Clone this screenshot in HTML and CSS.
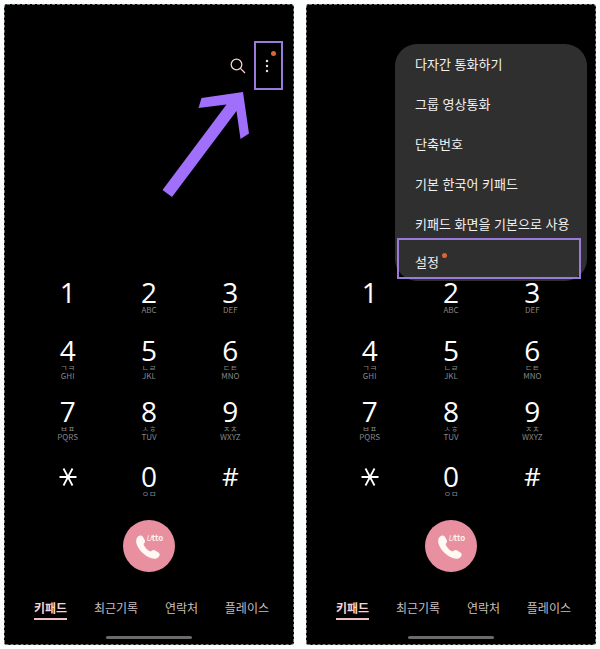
FILE: index.html
```
<!DOCTYPE html>
<html lang="ko">
<head>
<meta charset="UTF-8">
<meta name="viewport" content="width=device-width, initial-scale=1.0">
<title>전화 키패드</title>
<link rel="stylesheet" href="styles.css">
</head>
<body>

<main class="screens">
    <section class="screen">
        <header class="top">
            <button class="icon-btn" type="button" aria-label="검색">
                <svg width="16" height="16" viewBox="0 0 16 16"><circle cx="6.5" cy="6.5" r="5.3"/><path d="M10.4 10.4L15 15"/></svg>
            </button>
            <button class="icon-btn more marked" type="button" aria-label="더보기">
                <svg width="4" height="14" viewBox="0 0 4 14"><circle cx="2" cy="2" r="1.2"/><circle cx="2" cy="7" r="1.2"/><circle cx="2" cy="12" r="1.2"/></svg>
                <span class="dot"></span>
            </button>
            <svg class="arrow" width="88" height="107" viewBox="0 0 88 107"><path d="M0.5 99L64.5 13.500L36.500 17L39.500 7L81 1L87 42.500L78.500 48L74.500 20L10 106Z"/></svg>
        </header>
        <div class="keypad">
            <button class="key" type="button">1</button>
            <button class="key" type="button">2<small>ABC</small></button>
            <button class="key" type="button">3<small>DEF</small></button>
            <button class="key" type="button">4<span>ㄱㅋ</span><small>GHI</small></button>
            <button class="key" type="button">5<span>ㄴㄹ</span><small>JKL</small></button>
            <button class="key" type="button">6<span>ㄷㅌ</span><small>MNO</small></button>
            <button class="key" type="button">7<span>ㅂㅍ</span><small>PQRS</small></button>
            <button class="key" type="button">8<span>ㅅㅎ</span><small>TUV</small></button>
            <button class="key" type="button">9<span>ㅈㅊ</span><small>WXYZ</small></button>
            <button class="key" type="button" aria-label="별표"><svg width="18" height="28" viewBox="0 0 18 28"><path d="M0.500 14H17.500M4.500 5.500L13.500 22.500M13.500 5.500L4.500 22.500"/></svg></button>
            <button class="key" type="button">0<span>ㅇㅁ</span></button>
            <button class="key hash" type="button">#</button>
        </div>
        <button class="call" type="button" aria-label="통화">
            <svg width="24" height="24" viewBox="0 0 24 24"><path d="M2 1.500C4 -0.300 6 0.300 7.200 2.200L8.800 5.200C9.600 7 8.200 8.200 7.600 9.300C8.600 12.500 11.500 15.500 14.700 16.600C16 15.800 17 14.500 18.700 15.300L22 17.300C24 18.700 24.200 20 22.800 21.700C21 23.800 18.500 24.300 15.500 23.300C8.500 21 2.500 15 0.500 8.500C-0.200 5.800 0.300 3 2 1.500Z"/></svg>
            <span class="call-mark"><i>U</i>tto</span>
        </button>
        <nav class="tabs">
            <a class="active" href="#">키패드</a>
            <a href="#">최근기록</a>
            <a href="#">연락처</a>
            <a href="#">플레이스</a>
        </nav>
        <div class="home-bar"></div>
    </section>

    <section class="screen">
        <header class="top"></header>
        <div class="keypad">
            <button class="key" type="button">1</button>
            <button class="key" type="button">2<small>ABC</small></button>
            <button class="key" type="button">3<small>DEF</small></button>
            <button class="key" type="button">4<span>ㄱㅋ</span><small>GHI</small></button>
            <button class="key" type="button">5<span>ㄴㄹ</span><small>JKL</small></button>
            <button class="key" type="button">6<span>ㄷㅌ</span><small>MNO</small></button>
            <button class="key" type="button">7<span>ㅂㅍ</span><small>PQRS</small></button>
            <button class="key" type="button">8<span>ㅅㅎ</span><small>TUV</small></button>
            <button class="key" type="button">9<span>ㅈㅊ</span><small>WXYZ</small></button>
            <button class="key" type="button" aria-label="별표"><svg width="18" height="28" viewBox="0 0 18 28"><path d="M0.500 14H17.500M4.500 5.500L13.500 22.500M13.500 5.500L4.500 22.500"/></svg></button>
            <button class="key" type="button">0<span>ㅇㅁ</span></button>
            <button class="key hash" type="button">#</button>
        </div>
        <button class="call" type="button" aria-label="통화">
            <svg width="24" height="24" viewBox="0 0 24 24"><path d="M2 1.500C4 -0.300 6 0.300 7.200 2.200L8.800 5.200C9.600 7 8.200 8.200 7.600 9.300C8.600 12.500 11.500 15.500 14.700 16.600C16 15.800 17 14.500 18.700 15.300L22 17.300C24 18.700 24.200 20 22.800 21.700C21 23.800 18.500 24.300 15.500 23.300C8.500 21 2.500 15 0.500 8.500C-0.200 5.800 0.300 3 2 1.500Z"/></svg>
            <span class="call-mark"><i>U</i>tto</span>
        </button>
        <nav class="tabs">
            <a class="active" href="#">키패드</a>
            <a href="#">최근기록</a>
            <a href="#">연락처</a>
            <a href="#">플레이스</a>
        </nav>
        <div class="home-bar"></div>

        <!-- 더보기 메뉴 -->
        <div class="menu">
            <button type="button">다자간 통화하기</button>
            <button type="button">그룹 영상통화</button>
            <button type="button">단축번호</button>
            <button type="button">기본 한국어 키패드</button>
            <button type="button">키패드 화면을 기본으로 사용</button>
            <button class="marked" type="button">설정<span class="dot"></span></button>
        </div>
    </section>
</main>

</body>
</html>
```
FILE: styles.css
```
body {
    margin: 0;
    background-color: #fbfefc;
    font-family: "Noto Sans CJK KR", sans-serif;
}
button {
    box-sizing: border-box;
    margin: 0;
    padding: 0;
    border: none;
    background: none;
    color: #fff;
    font-family: inherit;
    cursor: pointer;
}
.screens {
    display: grid;
    grid-template-columns: 1fr 1fr;
    gap: 12px;
    padding: 4px;
}
.screen {
    position: relative;
    display: flex;
    flex-direction: column;
    border: 1px dashed #777;
    border-radius: 3px;
    background-color: #000;
}
.top {
    box-sizing: border-box;
    display: flex;
    justify-content: flex-end;
    align-items: flex-start;
    gap: 8px;
    min-height: 273px;
    padding: 36px 10px 0 0;
}
.icon-btn {
    display: flex;
    align-items: center;
    justify-content: center;
    width: 16px;
    height: 49px;
}
.icon-btn svg {
    fill: none;
    stroke: #f3d3cb;
    stroke-width: 1.3;
}
.more {
    position: relative;
    width: 29px;
}
.more svg {
    margin-right: 4px;
    fill: #f5ded8;
    stroke: none;
}
.marked {
    border: 2px solid #9a7bdc;
}
.dot {
    width: 5px;
    height: 5px;
    border-radius: 50%;
    background-color: #dd6534;
}
.more .dot {
    position: absolute;
    top: 8px;
    right: 5px;
}
.arrow {
    position: absolute;
    top: 86px;
    right: 43px;
    fill: #a06ffb;
}

.keypad {
    display: grid;
    grid-template-columns: 1fr 1fr 1fr;
    grid-template-rows: 58px 61px 65px 58px;
    padding: 0 22px;
}
.key {
    display: flex;
    flex-direction: column;
    align-items: center;
    font-family: "Open Sans", "Noto Sans CJK KR", sans-serif;
    font-size: 28px;
    line-height: 28px;
}
.key svg {
    margin-top: 1px;
    fill: none;
    stroke: #fff;
    stroke-width: 1.8;
}
.key span,
.key small {
    color: #858585;
    font-family: "Noto Sans CJK KR", sans-serif;
    font-size: 8px;
    line-height: 8px;
}
.hash {
    font-size: 26px;
}
.call {
    position: relative;
    align-self: center;
    width: 52px;
    height: 52px;
    border-radius: 50%;
    background-color: #e88fa0;
}
.call svg {
    display: block;
    margin: 2px 0 0 13px;
    fill: #fff8f3;
}
.call-mark {
    position: absolute;
    top: 14px;
    left: 23px;
    color: #fff3ee;
    font-size: 8px;
    font-weight: bold;
    line-height: 8px;
}
.call-mark i {
    font-weight: normal;
}

.tabs {
    display: flex;
    justify-content: space-between;
    padding: 27px 24px 0 29px;
}
.tabs a {
    padding-bottom: 1px;
    color: #c9bfbf;
    font-size: 12px;
    line-height: 18px;
    text-decoration: none;
}
.tabs .active {
    border-bottom: 2px solid #efc0c4;
    color: #f6d3d4;
    font-weight: bold;
}
.home-bar {
    align-self: center;
    width: 86px;
    height: 3px;
    margin: 16px 0 5px;
    border-radius: 2px;
    background-color: #6b6b6b;
}

.menu {
    position: absolute;
    top: 39px;
    right: 8px;
    display: flex;
    flex-direction: column;
    width: 192px;
    box-sizing: border-box;
    padding: 0 6px 2px 2px;
    border-radius: 22px;
    background-color: #2f2f2f;
}
.menu button {
    display: flex;
    align-items: center;
    height: 40px;
    padding-left: 18px;
    color: #f2f2f2;
    font-size: 13px;
    line-height: 20px;
}
.menu .marked {
    height: 41px;
    margin-top: -6px;
    padding: 6px 0 0 16px;
}
.menu .dot {
    margin: 0 0 12px 3px;
}
```
